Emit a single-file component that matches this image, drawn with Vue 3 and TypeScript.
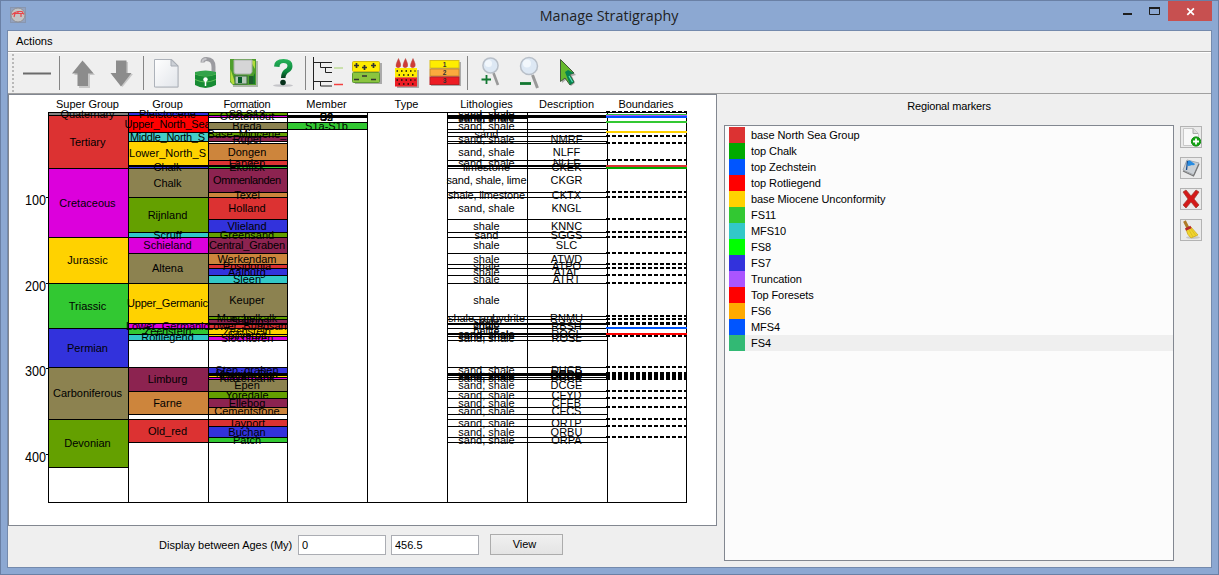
<script setup lang="ts">
interface Unit { top: number; bottom: number; label?: string; fill?: string }
interface Column { title: string; left: number; right: number; units: Unit[] }
interface Boundary { y: number; color?: string }

const RED = '#dc3232', MAGENTA = '#dc00dc', YELLOW = '#ffd200', GREEN = '#32c832', BLUE = '#3232dc'
const OLIVE = '#8c8250', LEAF = '#64a000', TEAL = '#32c8c8', PLUM = '#8c2350', ORANGE = '#cd853c'

const u = (top: number, bottom: number, label?: string, fill?: string): Unit => ({ top, bottom, label, fill })

const fitted: Record<string, number> = {
  Ommenlanden: 68, Middle_North_S: 75, Lower_North_S: 77, Upper_North_Sea: 86, Upper_Germanic: 81,
  Lower_Germanic: 83, Central_Graben: 76, 'sand, shale, lime': 80, 'shale, limestone': 77,
  'shale, anhydrite': 77, Formation: 47, Quaternary: 54, Boundaries: 55,
}

const columns: Column[] = [
  { title: 'Super Group', left: 48, right: 128, units: [
    u(112, 115, 'Quaternary', '#828282'), u(115, 168, 'Tertiary', RED), u(168, 237, 'Cretaceous', MAGENTA),
    u(237, 283, 'Jurassic', YELLOW), u(283, 328, 'Triassic', GREEN), u(328, 367, 'Permian', BLUE),
    u(367, 419, 'Carboniferous', OLIVE), u(419, 467, 'Devonian', LEAF) ] },
  { title: 'Group', left: 128, right: 208, units: [
    u(112, 115, 'Pleistocene', BLUE), u(115, 132, 'Upper_North_Sea', '#ff0000'), u(132, 141, 'Middle_North_S', '#46cdc8'),
    u(141, 165, 'Lower_North_S', YELLOW), u(165, 166), u(166, 168, 'Chalk', BLUE), u(168, 197, 'Chalk', OLIVE),
    u(197, 232, 'Rijnland', LEAF), u(232, 237, 'Scruff', TEAL), u(237, 253, 'Schieland', MAGENTA),
    u(253, 283, 'Altena', OLIVE), u(283, 323, 'Upper_Germanic', YELLOW), u(323, 328, 'Lower_Germanic', MAGENTA),
    u(328, 334, 'Zechstein', GREEN), u(334, 340, 'Rotliegend', TEAL), u(367, 391, 'Limburg', PLUM),
    u(391, 414, 'Farne', ORANGE), u(419, 442, 'Old_red', RED) ] },
  { title: 'Formation', left: 208, right: 287, units: [
    u(112, 115, 'S8-S13', LEAF), u(115, 117, 'Oosterhout', MAGENTA), u(122, 129, 'Breda', OLIVE),
    u(132, 136, 'Base_Miocene_', LEAF), u(136, 141, 'Rupel', PLUM), u(141, 143), u(143, 160, 'Dongen', ORANGE),
    u(160, 165, 'Landen', RED), u(165, 166), u(166, 168, 'Ekofisk', GREEN), u(168, 192, 'Ommenlanden', PLUM),
    u(192, 197, 'Texel', ORANGE), u(197, 219, 'Holland', RED), u(219, 232, 'Vlieland', BLUE),
    u(232, 237, 'Greensand', LEAF), u(237, 253, 'Central_Graben', PLUM), u(253, 264, 'Werkendam', ORANGE),
    u(264, 268, 'Posidonia', RED), u(268, 275, 'Aalburg', BLUE), u(275, 283, 'Sleen', TEAL),
    u(283, 316, 'Keuper', OLIVE), u(316, 319, 'Muschelkalk', LEAF), u(319, 323, 'Solling', PLUM),
    u(323, 324), u(324, 328, 'Lower_Bundsan', RED), u(328, 334, 'Zechstein', YELLOW), u(334, 336, 'Silverpit', YELLOW),
    u(336, 340, 'Slochteren', MAGENTA), u(367, 373, 'Step_graben', BLUE), u(373, 374, 'Maurits_Rua'), u(374, 375),
    u(375, 377, 'Klaverbank', YELLOW), u(377, 379, 'Klaverbank', MAGENTA), u(379, 391, 'Epen', OLIVE), u(391, 398, 'Yoredale', LEAF),
    u(398, 407, 'Ellebog', PLUM), u(407, 414, 'Cementstone', ORANGE), u(419, 426, 'Tayport', RED),
    u(426, 437, 'Buchan', BLUE), u(437, 442, 'Patch', GREEN) ] },
  { title: 'Member', left: 287, right: 367, units: [
    u(115, 116, 'S4'), u(116, 117, 'S2'), u(117, 117, 'S3'), u(122, 129, 'S1a-S1b', GREEN) ] },
  { title: 'Type', left: 367, right: 447, units: [] },
  { title: 'Lithologies', left: 447, right: 527, units: [
    u(112, 115, 'sand, shale'), u(115, 116, 'sand, shale'), u(116, 117, 'sand, shale'), u(117, 118, 'sand, shale'),
    u(122, 129, 'sand, shale'), u(132, 136, 'sand'), u(136, 141, 'sand, shale'), u(141, 143), u(143, 160, 'sand, shale'),
    u(160, 165, 'sand, shale'), u(165, 166), u(166, 168, 'limestone'), u(168, 192, 'sand, shale, lime'),
    u(192, 197, 'shale, limestone'), u(197, 219, 'sand, shale'), u(219, 232, 'shale'), u(232, 237, 'sand'),
    u(237, 253, 'shale'), u(253, 264, 'shale'), u(264, 268, 'shale'), u(268, 275, 'shale'), u(275, 283, 'shale'),
    u(283, 316, 'shale'), u(316, 319, 'shale, anhydrite'), u(319, 323, 'shale'), u(323, 324, 'shale'), u(324, 328, 'shale'),
    u(328, 333, 'halite'), u(333, 334, 'sand, shale'), u(334, 336, 'sand, shale'), u(336, 340, 'sand, shale'),
    u(367, 373, 'sand, shale'), u(373, 374), u(374, 375, 'sand, shale'), u(375, 377, 'sand, shale'), u(377, 379, 'sand, shale'),
    u(379, 391, 'sand, shale'), u(391, 398, 'sand, shale'), u(398, 407, 'sand, shale'), u(407, 414, 'sand, shale'),
    u(419, 426, 'sand, shale'), u(426, 437, 'sand, shale'), u(437, 442, 'sand, shale') ] },
  { title: 'Description', left: 527, right: 607, units: [
    u(112, 115), u(115, 116), u(116, 117), u(122, 129), u(132, 136), u(136, 141, 'NMRF'), u(141, 143), u(143, 160, 'NLFF'),
    u(160, 165, 'NLLF'), u(165, 166), u(166, 168, 'CKEK'), u(168, 192, 'CKGR'), u(192, 197, 'CKTX'), u(197, 219, 'KNGL'),
    u(219, 232, 'KNNC'), u(232, 237, 'SGGS'), u(237, 253, 'SLC'), u(253, 264, 'ATWD'), u(264, 268, 'ATPO'),
    u(268, 275, 'ATAL'), u(275, 283, 'ATRT'), u(283, 316), u(316, 319, 'RNMU'), u(319, 323), u(323, 324), u(324, 328, 'RBSH'),
    u(328, 333), u(333, 334, 'ROCL'), u(334, 336), u(336, 340, 'ROSL'), u(367, 373, 'DHCB'), u(373, 374, 'DCDH'), u(374, 375, 'DCCU'),
    u(375, 377, 'DCCR'), u(377, 379, 'DCCK'), u(379, 391, 'DCGE'), u(391, 398, 'CFYD'), u(398, 407, 'CFEB'), u(407, 414, 'CFCS'),
    u(419, 426, 'ORTP'), u(426, 437, 'ORBU'), u(437, 442, 'ORPA') ] },
  { title: 'Boundaries', left: 607, right: 686, units: [] },
]

const boundaries: Boundary[] = [
  ...[112, 136, 143, 160, 192, 197, 219, 232, 237, 253, 264, 268, 275, 283, 316, 319, 323, 324, 336, 367, 373, 375, 377, 379, 391, 398, 407, 419, 426, 437].map(y => ({ y })),
  { y: 115, color: GREEN }, { y: 116, color: '#a050ff' }, { y: 117, color: '#0055ff' }, { y: 122, color: GREEN },
  { y: 132, color: YELLOW }, { y: 168, color: '#00aa00' }, { y: 166, color: RED }, { y: 328, color: '#0055ff' }, { y: 334, color: '#ff0000' },
]
const ticks = [{ v: 100, y: 197 }, { v: 200, y: 283 }, { v: 300, y: 368 }, { v: 400, y: 454 }]

const midX = (c: Column) => (c.left + c.right) / 2 - 0.5
const baseline = (n: Unit) => Math.ceil((n.top + n.bottom) / 2) + 4

const markers = [
  ['base North Sea Group', '#dc3232'], ['top Chalk', '#00aa00'], ['top Zechstein', '#0055ff'], ['top Rotliegend', '#ff0000'],
  ['base Miocene Unconformity', '#ffd200'], ['FS11', '#32c832'], ['MFS10', '#32c8c8'], ['FS8', '#00ff00'], ['FS7', '#3232dc'],
  ['Truncation', '#aa55ff'], ['Top Foresets', '#ff0000'], ['FS6', '#ffaa00'], ['MFS4', '#0055ff'], ['FS4', '#32b974'],
].map(([name, color]) => ({ name, color }))
const selected = 'FS4'
</script>

<template>
  <div class="window">
    <header class="titlebar">
      <svg class="app-icon" width="16" height="16" viewBox="0 0 16 16">
        <rect x=".5" y=".5" width="15" height="15" fill="#93a2bf" stroke="#8896b0" />
        <circle cx="8" cy="8" r="7" fill="#c4c4c6" stroke="#8f9094" />
        <path d="M2 7.500l3-2 3-1 4 0 2 3M3 6.500h10M5 6.500l-1 3.500M11 6.500v3.500M8 5v2" stroke="#e8454a" stroke-width="1.200" fill="none" />
      </svg>
      <h1>Manage Stratigraphy</h1>
      <div class="controls">
        <svg width="90" height="21" viewBox="1121 0 90 21">
          <rect x="1122" y="13" width="9" height="2" fill="#1e1e1e" />
          <path d="M1148.500 8v6.500h10V8" fill="none" stroke="#1e1e1e" /><rect x="1148" y="7" width="11" height="2" fill="#1e1e1e" />
          <rect x="1167" y="1" width="45" height="20" fill="#c75050" />
          <path d="M1186.300 8.300l6.600 6.600M1192.900 8.300l-6.600 6.600" stroke="#fff" stroke-width="1.700" />
        </svg>
      </div>
    </header>

    <div class="client">
      <nav class="menu">Actions</nav>
      <div class="toolbar">
        <span class="grip"></span>
        <svg class="tool" viewBox="18 54 39 38"><path d="M23 73.500h28" stroke="#6b6b6b" stroke-width="2" /></svg>
        <i class="sep"></i>
        <svg class="tool" viewBox="63 54 39 38">
          <path d="M84 62l11 13h-5v13h-11V75h-5z" fill="#c8c8c8" /><path d="M82.500 60.500L93.500 73.500h-5.500V86h-10.500V73.500H72z" fill="#8c8c8c" />
        </svg>
        <svg class="tool" viewBox="102 54 39 38">
          <path d="M117 62h11v12h5l-10.500 13L112 75h5z" fill="#c8c8c8" /><path d="M116 60.500h10.500V73h5L121 86.500 110.500 73h5.500z" fill="#8c8c8c" />
        </svg>
        <i class="sep"></i>
        <svg class="tool" viewBox="147 54 39 38">
          <defs><linearGradient id="paper" x2="1" y2="1"><stop stop-color="#fff" /><stop offset="1" stop-color="#e2e5ea" /></linearGradient></defs>
          <path d="M155.500 59.500h17l6 6v22h-23z" fill="#c5c5c5" /><path d="M154.500 59.500h17l6.500 6.500v21h-23.500z" fill="url(#paper)" stroke="#adb2ba" /><path d="M171 59.500v6.500h7z" fill="#ccd0d6" stroke="#a7acb4" />
        </svg>
        <svg class="tool" viewBox="186 54 39 38">
          <path d="M202.500 62.500q0-3.500 4-3.500 7 0 7 8v5" fill="none" stroke="#9b9ba0" stroke-width="4" />
          <path d="M202.500 62q0-3 4-3" fill="none" stroke="#c5c5c9" stroke-width="2" />
          <path d="M195 74q10.500-5 21 0v11q-10.500 6-21 0z" fill="#178b34" /><path d="M195 74q10.500 4 21 0M195 79.500q10.500 5 21 0" stroke="#5ebf59" fill="none" /><path d="M195 72q10.500-3 21 0v2q-10.500 4-21 0z" fill="#32a34a" />
          <circle cx="205.500" cy="79.500" r="2.200" fill="#fff" /><path d="M205.500 80v6" stroke="#fff" stroke-width="1.500" />
        </svg>
        <svg class="tool" viewBox="225 54 39 38">
          <path d="M232 61h26v26h-25z" fill="#aeb7ab" /><path d="M230 59h26v26h-23l-3-3z" fill="#4e9e2c" /><path d="M230.500 69l5 15h-3l-2-3zM250 60l5 9v-8z" fill="#b2dc3a" /><path d="M255 73l-6 11h6z" fill="#16762c" />
          <path d="M234 60h18v12q-1 2-2 2h-14q-2 0-2-2z" fill="#d5d5d6" stroke="#a9b0a9" /><rect x="235" y="76" width="12" height="8" fill="#b5c9b8" stroke="#3b6840" /><rect x="238" y="77" width="4" height="6" fill="#075b28" /><rect x="249" y="76" width="4" height="8" fill="#205d2d" />
        </svg>
        <svg class="tool" viewBox="264 54 39 38">
          <defs><linearGradient id="help" x2="0" y2="1"><stop stop-color="#27b35a" /><stop offset=".65" stop-color="#0b883d" /><stop offset="1" stop-color="#053a1c" /></linearGradient></defs>
          <ellipse cx="283" cy="85.500" rx="10" ry="1.300" fill="#c5c5c9" />
          <path d="M274 66.500q0-7.500 9.500-7.500 9 0 9 7 0 4-4 6.500-3 2-3 5.500h-4.500q0-6 3.500-8.500 3-1.500 3-3.500 0-3-4-3t-4 4z" fill="url(#help)" />
          <circle cx="283" cy="82.500" r="2.800" fill="#06301a" />
        </svg>
        <i class="sep"></i>
        <svg class="tool" viewBox="309 54 39 38">
          <path d="M313.500 57v33M313 62.500h19M320.500 62v5.500h11.500M325.500 67v5.500h6.500M313 81.500h19M320.500 81v5h11.500" fill="none" stroke="#222" />
          <path d="M334 68h9" stroke="#bedb96" stroke-width="1.500" /><path d="M334 84.500h9" stroke="#f34040" stroke-width="1.500" />
        </svg>
        <svg class="tool" viewBox="348 54 39 38">
          <path d="M354 63h28v21h-27z" fill="#aaa" /><rect x="352.500" y="61.500" width="27" height="10" rx="1" fill="#ffec00" stroke="#d1bb14" /><rect x="352.500" y="72.500" width="27" height="10" rx="1" fill="#8bc53f" stroke="#5d9a30" />
          <path d="M354 65.500h5M356.500 63v5M362 67.500h5M364.500 65v5M371 65.500h5M373.500 63v5M362 76h5M354 79.500h5M371 79.500h5" stroke="#333" stroke-width="1.700" />
        </svg>
        <svg class="tool" viewBox="387 54 39 38">
          <path d="M397 70h22v18h-22z" fill="#aaa" /><rect x="395" y="68" width="22" height="9.500" fill="#ffec00" /><rect x="395" y="77.500" width="22" height="9" fill="#ed1c24" />
          <path v-for="x in [398, 405, 412.500]" :key="x" :d="`M${x + .5} 58.500q-3 6-2.500 8 2 2.500 4.500 0 1-2-2-8z`" fill="#cf3b36" stroke="#b9514b" stroke-width=".5" />
          <path d="M396.500 71h19M398.500 75h17M396.500 80h19M398.500 84h17" stroke="#111" stroke-width="1.500" stroke-dasharray="1.500 3" />
        </svg>
        <svg class="tool" viewBox="426 54 39 38">
          <path d="M431 62h30v24h-30z" fill="#aaa" /><rect x="430" y="60.500" width="29" height="7.500" fill="#ffed00" stroke="#d9bf17" /><rect x="430" y="69" width="29" height="7" fill="#fbaa3e" stroke="#c88b2d" /><rect x="430" y="77" width="29" height="7.500" fill="#ed1c24" stroke="#b91f24" />
          <g class="digits"><text x="444.500" y="67">1</text><text x="444.500" y="75.300">2</text><text x="444.500" y="83.300">3</text></g>
        </svg>
        <i class="sep"></i>
        <svg class="tool" viewBox="471 54 39 38">
          <path d="M493.500 73l4.500 12" stroke="#999" stroke-width="2.600" /><circle cx="490.500" cy="65.500" r="7.600" fill="#dde8f4" stroke="#b8bfc8" stroke-width="1.500" /><circle cx="488.500" cy="63.500" r="3.500" fill="#f2f7fc" />
          <path d="M481.500 79.500h9.500M486.500 75v9" stroke="#137832" stroke-width="1.800" />
        </svg>
        <svg class="tool" viewBox="510 54 39 38">
          <path d="M532.500 75l5 13" stroke="#999" stroke-width="3" /><circle cx="529" cy="66" r="8.500" fill="#dde8f4" stroke="#b8bfc8" stroke-width="1.500" /><circle cx="527" cy="63.500" r="4" fill="#f2f7fc" />
          <path d="M520 83.500h11" stroke="#137832" stroke-width="2.800" />
        </svg>
        <svg class="tool" viewBox="549 54 39 38">
          <path d="M562 61l14 14-4 1 3 7-4 3-4-7-5 4z" fill="#aaa" />
          <path d="M560.500 59.500L574 73l-4.500 1.500 4.500 7.500-4 3-5-7-4.500 3.500z" fill="#65b92d" stroke="#41593a" />
          <path d="M565 72l3-2 6 3-4.500 1.500 4.500 7.500-4 3z" fill="#078350" /><path d="M569 76l3.500 6" stroke="#5de0bd" stroke-width="1.200" />
        </svg>
      </div>

      <main class="body">
        <section class="left">
          <div class="chart">
            <svg width="707" height="430" viewBox="9 95 707 430">
              <g v-for="c in columns" :key="c.title">
                <text class="label" :x="midX(c)" y="108" :textLength="fitted[c.title]">{{ c.title }}</text>
                <rect v-for="(n, i) in c.units" :key="'f' + i" :x="c.left" :y="n.top" :width="c.right - c.left" :height="n.bottom - n.top" :fill="n.fill || '#fff'" />
                <text v-for="(n, i) in c.units" :key="'t' + i" class="label" :x="midX(c)" :y="baseline(n)" :textLength="fitted[n.label || '']">{{ n.label }}</text>
                <g class="lines">
                  <template v-for="(n, i) in c.units" :key="'l' + i">
                    <rect :x="c.left" :y="n.top" :width="c.right - c.left" height="1" />
                    <rect :x="c.left" :y="n.bottom" :width="c.right - c.left" height="1" />
                  </template>
                  <rect :x="c.left" y="112" width="1" height="390" />
                </g>
              </g>
              <g class="lines">
                <rect x="48" y="112" width="639" height="1" /><rect x="48" y="502" width="639" height="1" /><rect x="686" y="112" width="1" height="391" />
                <rect v-for="t in ticks" :key="t.v" x="46" :y="t.y" width="3" height="1" />
              </g>
              <text v-for="t in ticks" :key="t.v" class="age" x="25" :y="t.y + 8" textLength="21" lengthAdjust="spacingAndGlyphs">{{ t.v }}</text>
              <line v-for="(b, i) in boundaries" :key="i" x1="606" x2="687" :y1="b.y" :y2="b.y" :stroke="b.color || '#000'" stroke-width="2" :stroke-dasharray="b.color ? undefined : '4 2'" />
            </svg>
          </div>
          <div class="range">
            <label>Display between Ages (My)</label>
            <input value="0" /><input value="456.5" />
            <button class="view">View</button>
          </div>
        </section>

        <section class="right">
          <h2>Regional markers</h2>
          <div class="marker-area">
            <ul class="markers">
              <li v-for="m in markers" :key="m.name" :class="{ selected: m.name === selected }">
                <span class="swatch" :style="{ background: m.color }"></span>{{ m.name }}
              </li>
            </ul>
            <div class="side">
              <button><svg viewBox="0 0 20 20"><path d="M2.500 1.500h10l5 5v12h-15z" fill="#f8f8f8" stroke="#c8c8c8" /><path d="M12 1.500v5h5" fill="#ddd" stroke="#aaa" /><circle cx="15" cy="14.500" r="4.600" fill="#12a312" stroke="#0a8a0a" /><path d="M12 14.500h6M15 11.500v6" stroke="#fff" stroke-width="1.800" /></svg></button>
              <button><svg viewBox="0 0 20 20"><path d="M6 2l12 3-5 12-11-5z" fill="#cbd0d5" stroke="#a3a8ae" /><path d="M2 13l10.500 5L18 6" fill="none" stroke="#777" stroke-width="1.300" /><path d="M6.500 3l-1 9" stroke="#174e91" stroke-width="1.300" /><path d="M7 3q2-1.500 4 1l3 2q-1 2-3 1-2 1-4.500 1z" fill="#268be1" /></svg></button>
              <button><svg viewBox="0 0 20 20"><path d="M2 3l3-2 5 6 5-6 3 2-5 7 5 6-3 3-5-6-5 6-3-3 5-6z" fill="#d41919" stroke="#9c3a26" stroke-width=".7" /></svg></button>
              <button><svg viewBox="0 0 20 20"><ellipse cx="12" cy="17.500" rx="7" ry="1.500" fill="#c7c7c7" /><path d="M3.500 1l3.500 7" stroke="#ae7b27" stroke-width="3" /><path d="M5 9l5-2 7 8-7 3q-4-3-5-9z" fill="#f0d52f" stroke="#caa51a" stroke-width=".7" /><path d="M8 10l4 7M10 9l5 7" stroke="#d9b91e" stroke-width=".8" /><path d="M4.500 9.500l5.500-2.500" stroke="#b7282b" stroke-width="2.500" /></svg></button>
            </div>
          </div>
        </section>
      </main>
    </div>
  </div>
</template>

<style>
body { margin: 0; overflow: hidden; }
</style>
<style scoped>
* { box-sizing: border-box; }
.window { width: 1219px; height: 575px; background: #8ca8d2; border: 1px solid #6a80a5; padding: 0 6px 6px; font: 11px "Liberation Sans", Arial, sans-serif; color: #000; }
.titlebar { height: 29px; display: flex; align-items: flex-start; margin: 0 0 0 3px; }
.app-icon { margin-top: 6px; flex: none; }
h1 { flex: 1; margin: 4px 0 0 70px; font: 14.300px/21px "Open Sans", "Noto Sans", sans-serif; text-align: center; color: #222; }
.controls { height: 21px; margin: -1px 0 0; flex: none; }
.controls svg { display: block; }
.client { height: 538px; background: #efefef; border: 1px solid #748aad; display: flex; flex-direction: column; }
.menu { height: 21px; padding: 0 0 0 8px; line-height: 21px; border-bottom: 1px solid #a0a0a0; font-size: 11.200px; flex: none; }
.toolbar { height: 42px; flex: none; display: flex; align-items: center; border-top: 1px solid #fff; border-bottom: 1px solid #a0a0a0; padding-left: 4px; }
.grip { width: 2px; height: 38px; margin-right: 4px; background: repeating-linear-gradient(#b9b9b9 0 2px, #efefef 2px 4px); }
.tool { width: 39px; height: 38px; flex: none; }
.sep { width: 6px; height: 34px; flex: none; background: linear-gradient(#858585, #858585) 2px 0 / 1px 34px no-repeat; }
.digits { font: bold 6.500px "Liberation Sans", sans-serif; text-anchor: middle; fill: #333; }
.body { flex: 1; display: flex; min-height: 0; }
.left { width: 709px; flex: none; }
.chart { width: 709px; height: 432px; border: 1px solid #828790; background: #fff; }
.chart svg { display: block; }
.label { font-size: 11px; text-anchor: middle; }
.age { font-size: 14px; }
.lines { shape-rendering: crispEdges; }
.range { display: flex; align-items: center; height: 38px; padding-left: 151px; }
.range label { width: 139px; white-space: nowrap; }
.range input { width: 88px; height: 20px; margin-right: 5px; border: 1px solid #abadb3; padding: 0 3px; font: inherit; background: #fff; }
.view { width: 73px; height: 21px; margin: -1px 0 0 6px; border: 1px solid #acacac; background: linear-gradient(#f0f0f0, #e4e4e4); font: inherit; padding: 0 4px 1px 0; }
.right { flex: 1; padding-left: 7px; }
h2 { margin: 0; width: 450px; height: 31px; font: 11px/24px "Liberation Sans", sans-serif; letter-spacing: -.17px; text-align: center; }
.marker-area { display: flex; gap: 6px; }
.markers { width: 450px; height: 436px; margin: 0; padding: 1px 0 0 4px; border: 1px solid #828790; background: #fcfcfc; list-style: none; }
.markers li { height: 16px; line-height: 16px; display: flex; gap: 6px; letter-spacing: -.08px; }
.markers li.selected { background: #efefef; }
.swatch { width: 16px; height: 16px; }
.side { display: flex; flex-direction: column; gap: 9px; padding-top: 1px; }
.side button { width: 22px; height: 22px; padding: 0; border: 1px solid #b3b3b3; background: #eaeaea; }
.side svg { width: 20px; height: 20px; display: block; }
</style>
